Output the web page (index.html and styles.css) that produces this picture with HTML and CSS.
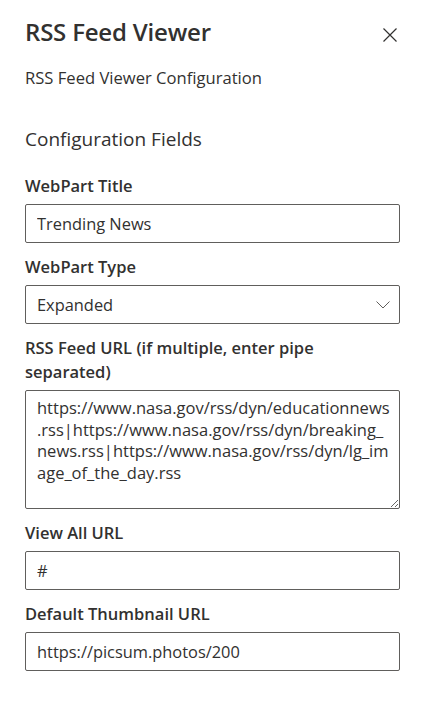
FILE: index.html
```html
<!DOCTYPE html>
<html lang="en">
<head>
<meta charset="utf-8">
<title>RSS Feed Viewer</title>
<link rel="stylesheet" href="styles.css">
</head>
<body>
<div class="panel">
  <header class="head">
    <h1 class="title">RSS Feed Viewer</h1>
    <button class="close" type="button" aria-label="Close">
      <svg width="16" height="16" viewBox="0 0 16 16"><path d="M1.5 1.5 L14.5 14.5 M14.5 1.5 L1.5 14.5" stroke="#323130" stroke-width="1.2" fill="none"/></svg>
    </button>
  </header>
  <p class="desc">RSS Feed Viewer Configuration</p>
  <h2 class="group">Configuration Fields</h2>

  <div class="field">
    <label class="label" for="f1">WebPart Title</label>
    <input class="input" id="f1" type="text" value="Trending News">
  </div>

  <div class="field">
    <label class="label">WebPart Type</label>
    <div class="select">
      <span class="select-text">Expanded</span>
      <svg class="chev" width="14" height="8" viewBox="0 0 14 8"><path d="M0.5 0.5 L7 7 L13.5 0.5" stroke="#605e5c" stroke-width="1" fill="none"/></svg>
    </div>
  </div>

  <div class="field">
    <label class="label" for="f3">RSS Feed URL (if multiple, enter pipe separated)</label>
    <textarea class="area" id="f3">https://www.nasa.gov/rss/dyn/educationnews.rss|https://www.nasa.gov/rss/dyn/breaking_news.rss|https://www.nasa.gov/rss/dyn/lg_image_of_the_day.rss</textarea>
  </div>

  <div class="field">
    <label class="label" for="f4">View All URL</label>
    <input class="input" id="f4" type="text" value="#">
  </div>

  <div class="field">
    <label class="label" for="f5">Default Thumbnail URL</label>
    <input class="input" id="f5" type="text" value="https://picsum.photos/200">
  </div>
</div>
</body>
</html>
```

FILE: styles.css
```css
* { box-sizing: border-box; }
html, body { margin: 0; padding: 0; background: #ffffff; }
body {
  font-family: "Open Sans", "Noto Sans", sans-serif;
  color: #323130;
}
.panel {
  width: 425px;
  padding: 14px 25px 30px 25px;
}
.head {
  display: flex;
  justify-content: space-between;
  align-items: flex-start;
}
.title {
  margin: 0;
  font-size: 24px;
  font-weight: 600;
  line-height: 36px;
  letter-spacing: -0.2px;
}
.close {
  border: 0;
  background: transparent;
  padding: 0;
  margin: 13px -6px 0 0;
  width: 32px;
  height: 16px;
  display: flex;
  align-items: center;
  justify-content: center;
}
.desc {
  margin: 16px 0 0 0;
  font-size: 16.6px;
  line-height: 24px;
}
.group {
  margin: 36px 0 0 0;
  font-size: 19px;
  font-weight: 400;
  line-height: 26px;
}
.field {
  display: flex;
  flex-direction: column;
}
.group + .field { margin-top: 22px; }
.field + .field { margin-top: 12px; }
.label {
  font-size: 16.5px;
  font-weight: 600;
  line-height: 24px;
  padding: 0 0 6px 0;
}
.input, .select, .area {
  width: 375px;
  border: 1px solid #605e5c;
  border-radius: 2px;
  background: #fff;
  font-family: "Open Sans", "Noto Sans", sans-serif;
  font-size: 16.4px;
  color: #323130;
}
.input {
  height: 39px;
  padding: 0 11px;
  outline: none;
}
.select {
  height: 39px;
  padding: 0 9px 0 11px;
  display: flex;
  align-items: center;
  justify-content: space-between;
}
.area {
  height: 119px;
  padding: 6px 8px 6px 11px;
  font-size: 16.5px;
  line-height: 21.5px;
  resize: vertical;
  outline: none;
  display: block;
}
```
